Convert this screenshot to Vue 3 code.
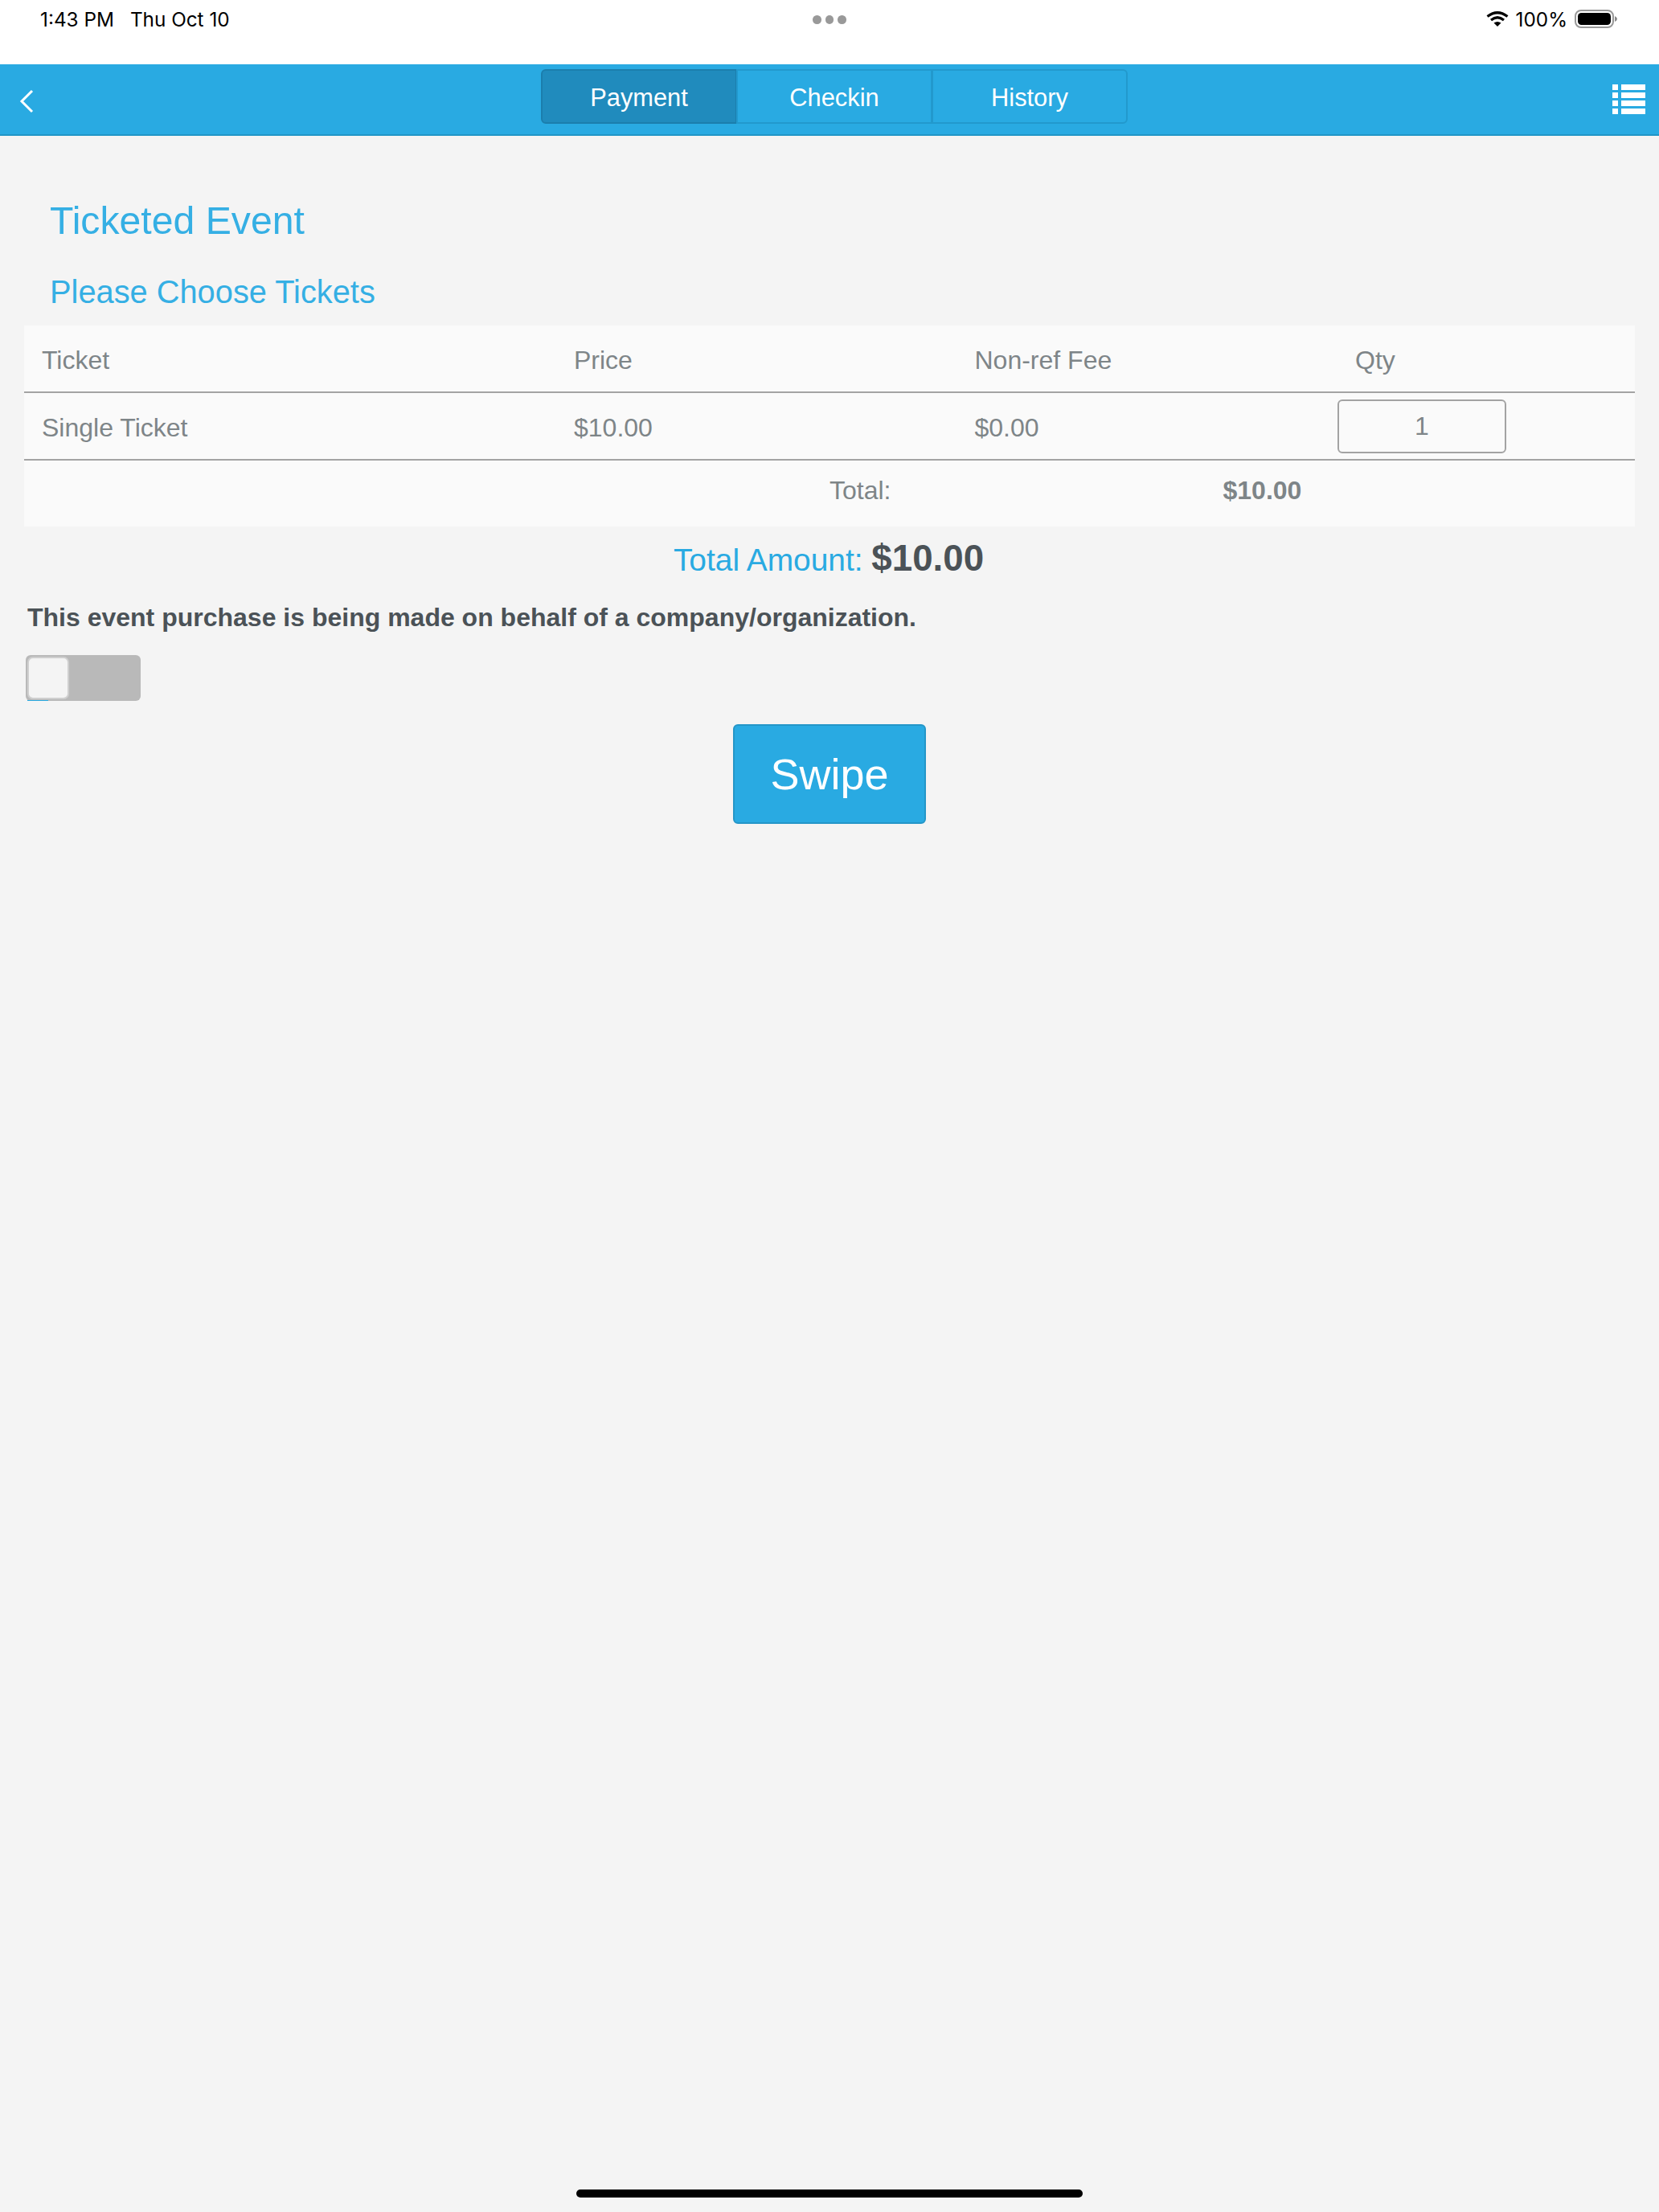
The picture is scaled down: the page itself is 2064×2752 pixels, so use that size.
<script setup>
const tabs = ['Payment', 'Checkin', 'History']
const listRows = [0, 10, 20, 30]
</script>

<template>
  <main class="page">
    <div class="status">
      <div class="status-left"><span>1:43 PM</span><span>Thu Oct 10</span></div>
      <div class="dots"><i></i><i></i><i></i></div>
      <div class="status-right">
        <svg class="wifi" width="28" height="19" viewBox="0 0 28 19">
          <path d="M1.5 6.5 Q14 -3 26.5 6.5" fill="none" stroke="#000" stroke-width="3.2"/>
          <path d="M6 11 Q14 4.5 22 11" fill="none" stroke="#000" stroke-width="3.2"/>
          <path d="M9.5 14.5 Q14 11.5 18.5 14.5 L14 19 Z" fill="#000"/>
        </svg>
        <span class="pct">100%</span>
        <svg class="battery" width="53" height="23" viewBox="0 0 53 23">
          <rect x="1" y="1" width="47" height="21" rx="7" fill="none" stroke="#999" stroke-width="2"/>
          <rect x="4" y="4" width="41" height="15" rx="4.5" fill="#000"/>
          <path d="M50 8 Q53 9.5 53 11.5 Q53 13.5 50 15 Z" fill="#888"/>
        </svg>
      </div>
    </div>
    <header class="nav">
      <svg class="back" width="18" height="30" viewBox="0 0 18 30"><path d="M16 2 L3 15 L16 28" fill="none" stroke="#fff" stroke-width="3"/></svg>
      <div class="tabs">
        <div v-for="(t, i) in tabs" :key="t" class="tab" :class="{ active: i === 0 }">{{ t }}</div>
      </div>
      <svg class="list" width="41" height="37" viewBox="0 0 41 37" fill="#fff">
        <g v-for="y in listRows" :key="y">
          <rect x="0" :y="y" width="7" height="7"/>
          <rect x="11" :y="y" width="30" height="7"/>
        </g>
      </svg>
    </header>
    <section class="content">
      <h1>Ticketed Event</h1>
      <h2>Please Choose Tickets</h2>
      <div class="table">
        <div class="row head"><span>Ticket</span><span>Price</span><span>Non-ref Fee</span><span class="qty-h">Qty</span></div>
        <div class="row"><span>Single Ticket</span><span>$10.00</span><span>$0.00</span><div class="qty">1</div></div>
        <div class="total"><span class="total-l">Total:</span><b>$10.00</b></div>
      </div>
      <p class="amount">Total Amount: <b>$10.00</b></p>
      <p class="behalf">This event purchase is being made on behalf of a company/organization.</p>
      <div class="toggle"><div class="knob"></div><div class="strip"></div></div>
      <div class="swipe-wrap"><button class="swipe">Swipe</button></div>
    </section>
    <div class="home"></div>
  </main>
</template>

<style>
html, body { background: #f4f4f4; }
</style>
<style scoped>
.page {
  position: relative;
  height: 2752px;
  background: #f4f4f4;
  font-family: "Liberation Sans", Arial, sans-serif;
  color: #7e8588;
  overflow: hidden;
}
.status {
  height: 80px;
  background: #fff;
  display: flex;
  justify-content: space-between;
  padding: 0 52px 0 50px;
  box-sizing: border-box;
  position: relative;
  color: #000;
  font-family: Inter, sans-serif;
  font-size: 24.3px;
  line-height: 48px;
}
.status-left { display: flex; gap: 20px; }
.status-right { display: flex; align-items: center; height: 47px; }
.pct { margin: 0 9px; }
.dots { position: absolute; left: 1011px; top: 19px; display: flex; gap: 5px; }
.dots i { width: 10.5px; height: 10.5px; border-radius: 50%; background: #999; }
.nav {
  height: 89px;
  box-sizing: border-box;
  background: #29aae2;
  border-bottom: 2px solid #2196c6;
  display: flex;
  justify-content: center;
  position: relative;
  padding-top: 6px;
}
.back { position: absolute; left: 24px; top: 31px; }
.list { position: absolute; right: 17px; top: 25px; }
.tabs { display: flex; height: 68px; margin-left: 12px; }
.tab {
  width: 244px;
  height: 68px;
  line-height: 67px;
  box-sizing: border-box;
  text-align: center;
  color: #fff;
  font-size: 30.8px;
  background: #29aae2;
  border: 2px solid #2299cd;
  margin-left: -1px;
}
.tab:first-child { border-radius: 6px 0 0 6px; margin-left: 0; }
.tab:last-child { border-radius: 0 6px 6px 0; }
.tab.active { background: #208bbd; border-color: #1b7ead; }
.content { padding: 0 30px; }
h1 { margin: 0; padding: 75px 0 0 32px; font-weight: 400; font-size: 48.2px; line-height: 60px; color: #35afe4; }
h2 { margin: 0; padding: 32px 0 0 32px; font-weight: 400; font-size: 39.8px; line-height: 54px; color: #35afe4; }
.table { margin-top: 15px; background: #fafafa; font-size: 32px; }
.row {
  display: grid;
  grid-template-columns: 662px 498.5px 451.5px 1fr;
  height: 84px;
  align-items: center;
  padding: 5px 0 0 22px;
  border-bottom: 2px solid #a3a3a3;
  box-sizing: border-box;
}
.qty-h { padding-left: 22px; }
.qty {
  width: 210px;
  height: 67px;
  line-height: 63px;
  box-sizing: border-box;
  border: 2px solid #a3a3a3;
  border-radius: 6px;
  text-align: center;
  margin-top: -4px;
}
.total { height: 82px; display: flex; align-items: center; padding: 0 0 8px 1002px; box-sizing: border-box; }
.total b { margin-left: 413px; }
.amount { margin: 15px 0 0; padding-right: 2px; text-align: center; font-size: 38.9px; line-height: 50px; color: #29aae2; }
.amount b { color: #4b5257; font-size: 45.7px; }
.behalf { margin: 22px 0 0 4px; font-size: 32px; font-weight: 700; color: #4b5257; line-height: 48px; }
.toggle {
  position: relative;
  width: 143px;
  height: 57px;
  margin: 23px 0 0 2px;
  background: #b9b9b9;
  border-radius: 6px;
  box-sizing: border-box;
  padding: 2px;
}
.knob { width: 52px; height: 53px; background: #f4f4f4; border: 2px solid #cfcfcf; border-radius: 7px; box-sizing: border-box; }
.strip { position: absolute; left: 2px; bottom: 0; width: 26px; height: 1px; background: #29aae2; }
.swipe-wrap { display: flex; justify-content: center; margin-top: 29px; }
.swipe {
  width: 240px;
  height: 124px;
  background: #29aae2;
  border: 2px solid #2496c8;
  border-radius: 6px;
  color: #fff;
  font-size: 54px;
  font-family: inherit;
}
.home { position: absolute; left: 717px; top: 2724px; width: 630px; height: 10px; border-radius: 5px; background: #000; }
</style>
